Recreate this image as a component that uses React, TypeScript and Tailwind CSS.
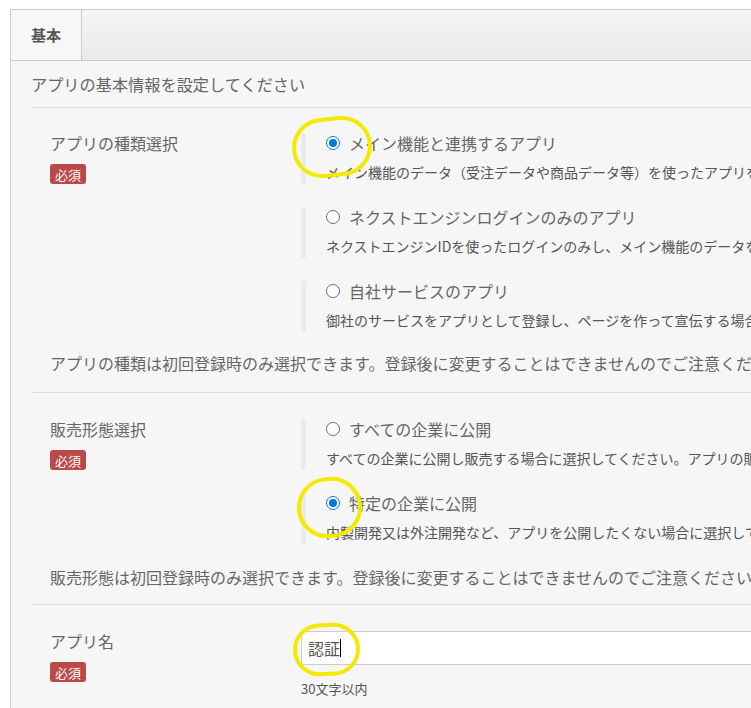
import React from 'react';

const font = { fontFamily: '"Noto Sans CJK JP", "Noto Sans", sans-serif' };

function Badge() {
  return (
    <span className="mt-[11px] inline-flex h-[20px] items-center rounded-[3px] bg-[#b94a48] px-[5px] text-[13px] leading-none text-white">
      必須
    </span>
  );
}

function Radio({ checked }: { checked?: boolean }) {
  if (checked) {
    return (
      <span className="flex h-[14px] w-[14px] shrink-0 items-center justify-center rounded-full border border-[#0078d7] bg-white">
        <span className="h-[8px] w-[8px] rounded-full bg-[#0078d7]" />
      </span>
    );
  }
  return <span className="h-[14px] w-[14px] shrink-0 rounded-full border border-[#6d6d6d] bg-white" />;
}

function Option({ label, desc, checked }: { label: string; desc: string; checked?: boolean }) {
  return (
    <div className="border-l-[5px] border-[#ebebeb] pb-[2px] pl-[20px]">
      <div className="flex h-[20px] items-center gap-[9px]">
        <Radio checked={checked} />
        <span className="text-[16px] leading-[20px] text-[#666]">{label}</span>
      </div>
      <p className="mt-[9px] whitespace-nowrap text-[14px] leading-[20px] text-[#555]">{desc}</p>
    </div>
  );
}

function FieldLabel({ text }: { text: string }) {
  return (
    <div className="flex w-[270px] shrink-0 flex-col items-start pl-[19px]">
      <span className="text-[16px] leading-[20px] text-[#666]">{text}</span>
      <Badge />
    </div>
  );
}

export default function App() {
  return (
    <div className="relative h-[708px] w-[751px] overflow-hidden bg-white" style={font}>
      <div className="ml-[10px] mt-[9px] w-[1100px] border border-[#ccc] bg-[#f6f6f6]">
        {/* tabs */}
        <div className="flex h-[51px] border-b border-[#ccc] bg-gradient-to-b from-[#f6f6f6] to-[#e9e9e9]">
          <div className="flex w-[71px] items-center justify-center border-r border-[#ccc] bg-[#f7f7f7] text-[15px] font-bold text-[#555]">
            基本
          </div>
        </div>

        <div className="px-[20px]">
          <p className="pb-[12px] pt-[12px] text-[16.2px] leading-[22px] text-[#666]">
            アプリの基本情報を設定してください
          </p>

          {/* app type */}
          <div className="border-t border-[#ddd] pb-[18px] pt-[25px]">
            <div className="flex">
              <FieldLabel text="アプリの種類選択" />
              <div className="flex flex-col gap-[23px]">
                <Option
                  checked
                  label="メイン機能と連携するアプリ"
                  desc="メイン機能のデータ（受注データや商品データ等）を使ったアプリを作成する場合に選択してください。"
                />
                <Option
                  label="ネクストエンジンログインのみのアプリ"
                  desc="ネクストエンジンIDを使ったログインのみし、メイン機能のデータを使わないアプリの場合に選択してください。"
                />
                <Option
                  label="自社サービスのアプリ"
                  desc="御社のサービスをアプリとして登録し、ページを作って宣伝する場合に選択してください。"
                />
              </div>
            </div>
            <p className="mt-[20px] whitespace-nowrap pl-[19px] text-[16px] leading-[22px] text-[#666]">
              アプリの種類は初回登録時のみ選択できます。登録後に変更することはできませんのでご注意ください。
            </p>
          </div>

          {/* sales type */}
          <div className="border-t border-[#ddd] pb-[16px] pt-[26px]">
            <div className="flex">
              <FieldLabel text="販売形態選択" />
              <div className="flex flex-col gap-[23px]">
                <Option
                  label="すべての企業に公開"
                  desc="すべての企業に公開し販売する場合に選択してください。アプリの販売価格を設定できます。"
                />
                <Option
                  checked
                  label="特定の企業に公開"
                  desc="内製開発又は外注開発など、アプリを公開したくない場合に選択してください。"
                />
              </div>
            </div>
            <p className="mt-[22px] whitespace-nowrap pl-[19px] text-[16px] leading-[22px] text-[#666]">
              販売形態は初回登録時のみ選択できます。登録後に変更することはできませんのでご注意ください。
            </p>
          </div>

          {/* app name */}
          <div className="border-t border-[#ddd] pb-[20px] pt-[26px]">
            <div className="flex">
              <FieldLabel text="アプリ名" />
              <div className="flex flex-col">
                <div className="flex h-[34px] w-[600px] items-center border border-[#ccc] bg-white px-[6px] text-[16px] text-[#555]">
                  <span>認証</span>
                  <span className="h-[18px] w-px bg-black" />
                </div>
                <p className="mt-[14px] text-[13px] leading-[20px] text-[#555]">30文字以内</p>
              </div>
            </div>
          </div>
        </div>
      </div>

      {/* yellow annotation marks */}
      <div className="absolute left-[292px] top-[117px] h-[60px] w-[80px] -rotate-6 rounded-full border-[4px] border-[#f5e900]" />
      <div className="absolute left-[297px] top-[477px] h-[61px] w-[65px] -rotate-6 rounded-full border-[4px] border-[#f5e900]" />
      <div className="absolute left-[293px] top-[623px] h-[53px] w-[67px] -rotate-3 rounded-full border-[4px] border-[#f5e900]" />
    </div>
  );
}
